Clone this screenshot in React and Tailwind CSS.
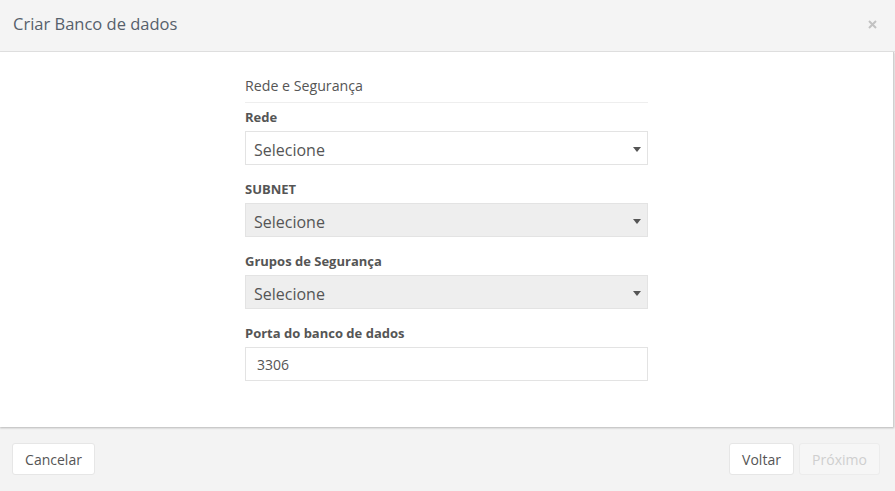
export default function App() {
  const font = { fontFamily: '"Open Sans", "Noto Sans", sans-serif' };
  const Caret = () => (
    <svg width="8" height="5" viewBox="0 0 8 5" className="absolute right-[6px] top-[15px]">
      <path d="M0 0 H8 L4 5 Z" fill="#555" />
    </svg>
  );
  const Select = ({ disabled }) => (
    <div
      className={`relative h-[34px] border border-[#e3e3e3] flex items-center pl-[8px] pt-[3px] text-[16px] text-[#555] ${disabled ? "bg-[#eeeeee]" : "bg-white"}`}
    >
      Selecione
      <Caret />
    </div>
  );
  const Label = ({ children }) => (
    <div className="text-[13px] leading-[18px] font-bold text-[#555] mb-[5px]">{children}</div>
  );
  return (
    <div className="w-[895px] h-[491px] bg-[#f3f3f3] flex flex-col overflow-hidden" style={font}>
      <div className="h-[52px] shrink-0 bg-[#f4f4f4] border-b border-[#e2e2e2] flex items-center justify-between pl-[13px] pr-[18px]">
        <div className="text-[16.5px] text-[#56606b] pb-[2px]">Criar Banco de dados</div>
        <svg width="9" height="9" viewBox="0 0 9 9" className="mb-[3px]">
          <path d="M1 1 L8 8 M8 1 L1 8" stroke="#c2c2c2" strokeWidth="2" />
        </svg>
      </div>
      <div className="w-[894px] h-[375px] shrink-0 bg-white border-r border-[#d0d0d0] shadow-[0_1px_2px_rgba(0,0,0,0.25)] flex justify-center">
        <div className="w-[403px] pt-[24px]">
          <div className="text-[14.2px] leading-[20px] text-[#555] pb-[6px] border-b border-[#eeeeee]">Rede e Segurança</div>
          <div className="mt-[5px]">
            <Label>Rede</Label>
            <Select />
          </div>
          <div className="mt-[15px]">
            <Label>SUBNET</Label>
            <Select disabled />
          </div>
          <div className="mt-[15px]">
            <Label>Grupos de Segurança</Label>
            <Select disabled />
          </div>
          <div className="mt-[15px]">
            <Label>Porta do banco de dados</Label>
            <div className="h-[34px] border border-[#e3e3e3] flex items-center pl-[11px] pt-[1px] text-[14px] text-[#555] bg-white">3306</div>
          </div>
        </div>
      </div>
      <div className="flex-1 flex items-center justify-between pl-[12px] pr-[15px]">
        <div className="h-[32px] w-[83px] bg-white border border-[#e6e6e6] rounded-[3px] flex items-center justify-center text-[14px] text-[#555]">Cancelar</div>
        <div className="flex gap-[5px]">
          <div className="h-[32px] w-[65px] bg-white border border-[#e6e6e6] rounded-[3px] flex items-center justify-center text-[14px] text-[#555]">Voltar</div>
          <div className="h-[32px] w-[81px] bg-[#f6f6f6] border border-[#ececec] rounded-[3px] flex items-center justify-center text-[14px] text-[#cfcfcf]">Próximo</div>
        </div>
      </div>
    </div>
  );
}
